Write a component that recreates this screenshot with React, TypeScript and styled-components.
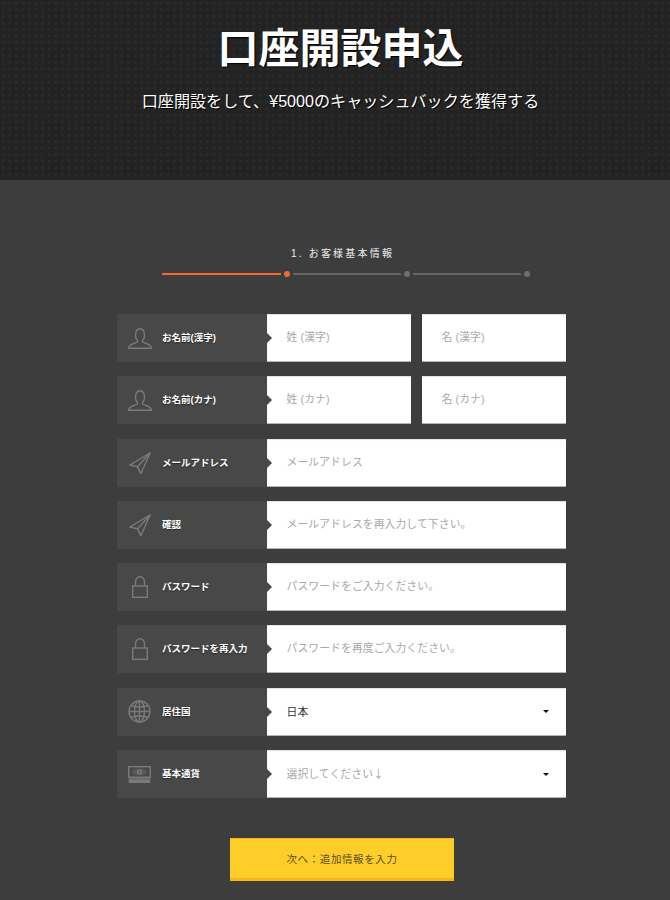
import React from "react";
import styled, { createGlobalStyle } from "styled-components";

const Global = createGlobalStyle`
  html, body { margin: 0; padding: 0; background: #3d3d3d; }
  body { font-family: "Liberation Sans", "Noto Sans CJK JP", sans-serif; overflow: hidden; }
  * { box-sizing: border-box; }
`;

const Page = styled.div`
  width: 670px;
  height: 900px;
  overflow: hidden;
  background: #3d3d3d;
`;

const Hero = styled.header`
  height: 180px;
  padding: 24px 0 0 11px;
  background-color: #232323;
  background-image: radial-gradient(circle at 3px 3px, #2d2d2d 1px, transparent 1.6px);
  background-size: 6.600px 6.600px;
  text-align: center;
  color: #fff;
`;

const Title = styled.h1`
  margin: 0;
  font-size: 41px;
  line-height: 50px;
  font-weight: 700;
  text-shadow: 1px 1px 1px #000;
`;

const Subtitle = styled.p`
  margin: 14px 0 0;
  font-size: 16.1px;
  line-height: 26px;
  text-shadow: 1px 1px 1px #000;
`;

const Main = styled.main`
  padding-top: 67px;
`;

const StepTitle = styled.div`
  margin-left: 291px;
  font-size: 10px;
  line-height: 14px;
  letter-spacing: 2.200px;
  color: #eeeeee;
  white-space: nowrap;
`;

const Stepper = styled.div`
  display: flex;
  align-items: center;
  margin: 9.500px 0 0 162px;
  height: 6px;
`;

const StepLine = styled.span<{ $w: number; $on?: boolean }>`
  width: ${(p) => p.$w}px;
  height: 2px;
  background: ${(p) => (p.$on ? "#f26a2e" : "#666666")};
`;

const StepDot = styled.span<{ $on?: boolean }>`
  width: 6px;
  height: 6px;
  margin: 0 3px;
  border-radius: 50%;
  background: ${(p) => (p.$on ? "#f26a2e" : "#6e6e6e")};
`;

const Form = styled.form`
  width: 449px;
  margin: 37.500px 0 0 117px;
  display: flex;
  flex-direction: column;
  gap: 14.3px;
`;

const Row = styled.div`
  position: relative;
  display: flex;
  height: 48px;
`;

const Label = styled.label`
  width: 150px;
  flex: none;
  display: flex;
  align-items: center;
  padding: 0 0 2px 10px;
  background: #484848;
  color: #fff;
  font-size: 9.5px;
  font-weight: 700;
  white-space: nowrap;
  text-shadow: 0 1px 1px #222;
`;

const IconBox = styled.span`
  width: 25px;
  height: 24px;
  margin: 2px 10px 0 0;
  flex: none;
  color: #7a7a7a;
  display: flex;
  align-items: center;
  justify-content: center;
`;

const Notch = styled.span`
  position: absolute;
  left: 150px;
  top: 19px;
  width: 0;
  height: 0;
  border-style: solid;
  border-width: 5px 0 5px 5px;
  border-color: transparent transparent transparent #484848;
  z-index: 1;
`;

const Fields = styled.div`
  flex: 1;
  min-width: 0;
  display: flex;
  gap: 11px;
`;

const Input = styled.input`
  flex: 1 1 0;
  width: 0;
  min-width: 0;
  height: 48px;
  padding: 0 0 1px 19.500px;
  border: 0;
  border-bottom: 1px solid #b5b5b5;
  border-radius: 0;
  outline: 0;
  background: #fff;
  box-shadow: inset 0 1px 1px #e2e2e2;
  font-family: inherit;
  font-size: 10.8px;
  letter-spacing: 0.1px;
  color: #333;
  &::placeholder { color: #a9a9a9; opacity: 1; }
`;

const SelectWrap = styled.div`
  position: relative;
  flex: 1;
  &::after {
    content: "";
    position: absolute;
    right: 17px;
    top: 22.500px;
    border-style: solid;
    border-width: 3.5px 3.5px 0 3.5px;
    border-color: #111 transparent transparent transparent;
  }
`;

const Select = styled.select<{ $muted?: boolean }>`
  width: 100%;
  height: 48px;
  padding: 0 0 1px 19.500px;
  border: 0;
  border-bottom: 1px solid #b5b5b5;
  border-radius: 0;
  outline: 0;
  appearance: none;
  background: #fff;
  box-shadow: inset 0 1px 1px #e2e2e2;
  font-family: "Noto Sans CJK JP", "Liberation Sans", sans-serif;
  font-size: 10.8px;
  letter-spacing: 0.1px;
  color: ${(p) => (p.$muted ? "#a9a9a9" : "#333")};
`;

const Actions = styled.div`
  margin: 40px 0 0 230px;
`;

const NextButton = styled.button`
  width: 224px;
  height: 43px;
  padding: 0;
  border: 0;
  border-bottom: 3px solid #fbb614;
  background: #fdcd2a;
  box-shadow: inset 0 1px 0 #fbb614;
  color: #5e4f1c;
  font-family: inherit;
  font-size: 10.5px;
  letter-spacing: 0.6px;
`;

const Svg = styled.svg`
  display: block;
  fill: none;
  stroke: currentColor;
  stroke-width: 1.4;
`;

const Person = () => (
  <Svg width="24" height="21" viewBox="0 0 24 21">
    <path d="M7.500 7.500C7.500 3 9 .7 12 .7s4.500 2.300 4.500 6.800c0 2.500-1 4-2 5v1.500c2.500 1.500 8.800 1.500 8.800 6.300H.7c0-4.800 6.300-4.800 8.800-6.300v-1.500c-1-1-2-2.500-2-5z" />
  </Svg>
);
const Plane = () => (
  <Svg width="22" height="22" viewBox="0 0 22 22">
    <path d="M21 1L1 13l7.500 1.800 3.500 6.700z" />
    <path d="M21 1L8.500 14.800l3.500 6.700" />
  </Svg>
);
const Lock = () => (
  <Svg width="16" height="22" viewBox="0 0 16 22">
    <rect x=".7" y="10" width="14.600" height="11.300" />
    <path d="M3.500 10V6c0-3 1.800-5.300 4.500-5.300S12.500 3 12.500 6v4" />
  </Svg>
);
const Globe = () => (
  <Svg width="23" height="23" viewBox="0 0 23 23">
    <circle cx="11.500" cy="11.500" r="10.500" />
    <ellipse cx="11.500" cy="11.500" rx="5" ry="10.500" />
    <path d="M11.500 1v21M1 11.500h21M3 5.500c5 2 12 2 17 0M3 17.500c5-2 12-2 17 0" />
  </Svg>
);
const Cash = () => (
  <Svg width="23" height="17" viewBox="0 0 23 17">
    <rect x=".7" y=".7" width="21.600" height="10.500" />
    <ellipse cx="11.500" cy="6" rx="7.500" ry="3.500" fill="#5a5a5a" stroke="none" />
    <circle cx="11.500" cy="6" r="1.800" />
    <path d="M.7 13h21.600M.7 14.700h21.600M.7 16.300h21.600" />
  </Svg>
);

type RowDef = { label: string; icon: React.ReactNode; fields: string[] };

const rows: RowDef[] = [
  { label: "お名前(漢字)", icon: <Person />, fields: ["姓 (漢字)", "名 (漢字)"] },
  { label: "お名前(カナ)", icon: <Person />, fields: ["姓 (カナ)", "名 (カナ)"] },
  { label: "メールアドレス", icon: <Plane />, fields: ["メールアドレス"] },
  { label: "確認", icon: <Plane />, fields: ["メールアドレスを再入力して下さい。"] },
  { label: "パスワード", icon: <Lock />, fields: ["パスワードをご入力ください。"] },
  { label: "パスワードを再入力", icon: <Lock />, fields: ["パスワードを再度ご入力ください。"] },
];

export default function App() {
  return (
    <Page>
      <Global />
      <Hero>
        <Title>口座開設申込</Title>
        <Subtitle>口座開設をして、¥5000のキャッシュバックを獲得する</Subtitle>
      </Hero>
      <Main>
        <StepTitle>1. お客様基本情報</StepTitle>
        <Stepper>
          <StepLine $w={119} $on />
          <StepDot $on />
          <StepLine $w={108} />
          <StepDot />
          <StepLine $w={108} />
          <StepDot />
        </Stepper>
        <Form>
          {rows.map((r) => (
            <Row key={r.label}>
              <Label>
                <IconBox>{r.icon}</IconBox>
                {r.label}
              </Label>
              <Notch />
              <Fields>
                {r.fields.map((f) => (
                  <Input key={f} placeholder={f} />
                ))}
              </Fields>
            </Row>
          ))}
          <Row>
            <Label>
              <IconBox><Globe /></IconBox>
              居住国
            </Label>
            <Notch />
            <Fields>
              <SelectWrap>
                <Select defaultValue="日本">
                  <option>日本</option>
                </Select>
              </SelectWrap>
            </Fields>
          </Row>
          <Row>
            <Label>
              <IconBox><Cash /></IconBox>
              基本通貨
            </Label>
            <Notch />
            <Fields>
              <SelectWrap>
                <Select $muted defaultValue="選択してください↓">
                  <option>選択してください↓</option>
                </Select>
              </SelectWrap>
            </Fields>
          </Row>
        </Form>
        <Actions>
          <NextButton type="button">次へ：追加情報を入力</NextButton>
        </Actions>
      </Main>
    </Page>
  );
}
